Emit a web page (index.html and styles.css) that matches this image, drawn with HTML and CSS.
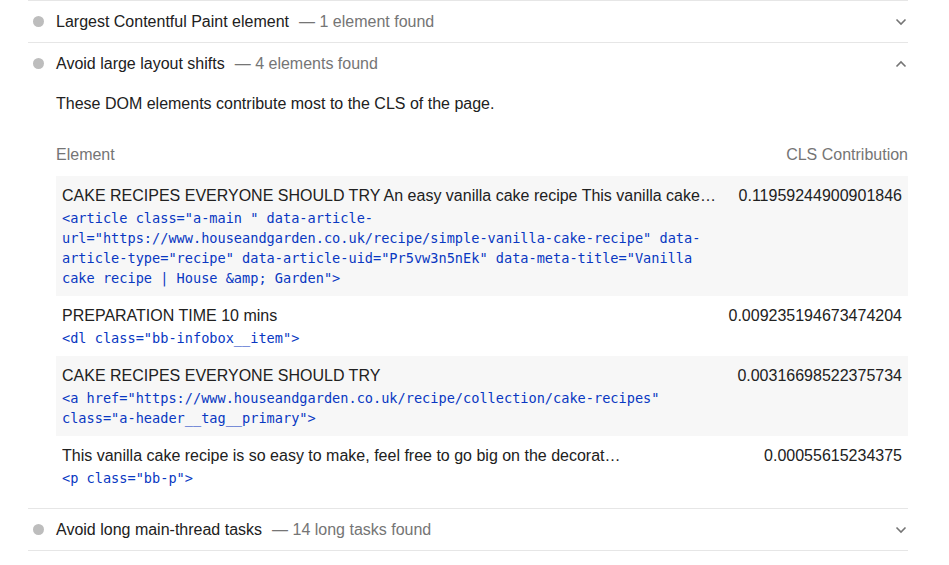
FILE: index.html
```html
<!DOCTYPE html>
<html lang="en">
<head>
<meta charset="utf-8">
<title>Audits</title>
<link rel="stylesheet" href="styles.css">
</head>
<body>
<div class="audits">
  <div class="audit">
    <div class="summary">
      <span class="dot"></span>
      <span class="title">Largest Contentful Paint element</span>
      <span class="display">— 1 element found</span>
      <svg class="chev" width="12" height="8" viewBox="0 0 12 8"><polyline points="1.5,1.5 6,6 10.5,1.5" fill="none" stroke="#757575" stroke-width="1.6"/></svg>
    </div>
  </div>
  <div class="audit">
    <div class="summary">
      <span class="dot"></span>
      <span class="title">Avoid large layout shifts</span>
      <span class="display">— 4 elements found</span>
      <svg class="chev" width="12" height="8" viewBox="0 0 12 8"><polyline points="1.5,6.5 6,2 10.5,6.5" fill="none" stroke="#757575" stroke-width="1.6"/></svg>
    </div>
    <div class="details">
      <p class="desc">These DOM elements contribute most to the CLS of the page.</p>
      <div class="table">
        <div class="row head">
          <div class="cell">Element</div>
          <div class="cell num">CLS Contribution</div>
        </div>
        <div class="row shade">
          <div class="cell">
            <div class="text">CAKE RECIPES EVERYONE SHOULD TRY An easy vanilla cake recipe This vanilla cake…</div>
            <div class="snippet">&lt;article class="a-main " data-article-url="https://www.houseandgarden.co.uk/recipe/simple-vanilla-cake-recipe" data-article-type="recipe" data-article-uid="Pr5vw3n5nEk" data-meta-title="Vanilla cake recipe | House &amp;amp; Garden"&gt;</div>
          </div>
          <div class="cell num">0.11959244900901846</div>
        </div>
        <div class="row">
          <div class="cell">
            <div class="text">PREPARATION TIME 10 mins</div>
            <div class="snippet">&lt;dl class="bb-infobox__item"&gt;</div>
          </div>
          <div class="cell num">0.009235194673474204</div>
        </div>
        <div class="row shade">
          <div class="cell">
            <div class="text">CAKE RECIPES EVERYONE SHOULD TRY</div>
            <div class="snippet">&lt;a href="https://www.houseandgarden.co.uk/recipe/collection/cake-recipes" class="a-header__tag__primary"&gt;</div>
          </div>
          <div class="cell num">0.00316698522375734</div>
        </div>
        <div class="row">
          <div class="cell">
            <div class="text">This vanilla cake recipe is so easy to make, feel free to go big on the decorat…</div>
            <div class="snippet">&lt;p class="bb-p"&gt;</div>
          </div>
          <div class="cell num">0.00055615234375</div>
        </div>
      </div>
    </div>
  </div>
  <div class="audit last">
    <div class="summary">
      <span class="dot"></span>
      <span class="title">Avoid long main-thread tasks</span>
      <span class="display">— 14 long tasks found</span>
      <svg class="chev" width="12" height="8" viewBox="0 0 12 8"><polyline points="1.5,1.5 6,6 10.5,1.5" fill="none" stroke="#757575" stroke-width="1.6"/></svg>
    </div>
  </div>
</div>
</body>
</html>
```
FILE: styles.css
```css
html, body {
  margin: 0;
  padding: 0;
  background: #fff;
}
body {
  font-family: "Liberation Sans", Arial, Helvetica, sans-serif;
  font-size: 16px;
  color: #212121;
}
.audits {
  width: 880px;
  margin-left: 28px;
}
.audit {
  border-top: 1px solid #e6e6e6;
}
.audit.last {
  border-bottom: 1px solid #e6e6e6;
}
.summary {
  height: 41px;
  display: flex;
  align-items: center;
}
.dot {
  width: 11px;
  height: 11px;
  border-radius: 50%;
  background: #bdbdbd;
  margin-left: 5px;
  margin-right: 12px;
  flex: none;
}
.title {
  color: #212121;
}
.display {
  color: #757575;
  margin-left: 10px;
}
.chev {
  margin-left: auto;
  margin-right: 1px;
}
.details {
  padding-left: 28px;
  padding-bottom: 12px;
}
.desc {
  margin: 9px 0 0;
  line-height: 22px;
  color: #212121;
}
.table {
  margin-top: 21px;
}
.row {
  display: grid;
  grid-template-columns: minmax(0, 1fr) 185px;
  padding: 8px 6px;
}
.row.head {
  padding: 8px 0 10px;
  color: #757575;
  line-height: 22px;
}
.row.shade {
  background: #f7f7f7;
}
.cell {
  min-width: 0;
}
.num {
  text-align: right;
  line-height: 21px;
  padding-top: 1px;
}
.row.head .num {
  padding-top: 0;
  line-height: 22px;
}
.text {
  line-height: 21px;
  padding-top: 1px;
  white-space: nowrap;
  overflow: hidden;
}
.snippet {
  margin-top: 2px;
  font-family: "DejaVu Sans Mono", Menlo, monospace;
  font-size: 13.6px;
  line-height: 20px;
  color: #0938c2;
}
```
